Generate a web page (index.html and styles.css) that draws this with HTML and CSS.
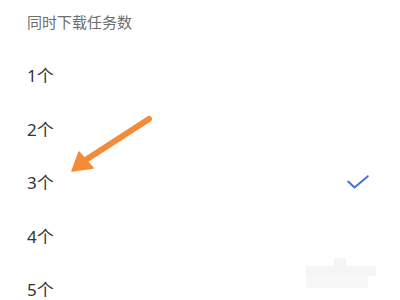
FILE: index.html
```html
<!DOCTYPE html>
<html lang="zh">
<head>
<meta charset="utf-8">
<link rel="stylesheet" href="styles.css">
</head>
<body>
<div class="page">
  <div class="title">同时下载任务数</div>
  <ul class="list">
    <li class="item"><span>1个</span></li>
    <li class="item"><span>2个</span></li>
    <li class="item selected"><span>3个</span>
      <svg class="check" width="22" height="14" viewBox="0 0 22 14"><path d="M1.2 6.5 L7.5 12.5 L20.8 1.2" fill="none" stroke="#3a6fd3" stroke-width="1.8" stroke-linecap="round" stroke-linejoin="round"/></svg>
    </li>
    <li class="item"><span>4个</span></li>
    <li class="item"><span>5个</span></li>
  </ul>
  <svg class="arrow" width="400" height="300" viewBox="0 0 400 300">
    <line x1="149" y1="119" x2="84" y2="161" stroke="#f58a37" stroke-width="6" stroke-linecap="round"/>
    <polygon points="72,171 79,152 93,168" fill="#f58a37" stroke="#f58a37" stroke-width="1.5" stroke-linejoin="round"/>
  </svg>
  <div class="mosaic">
    <div class="m m1"></div>
    <div class="m m2"></div>
    <div class="m m3"></div>
  </div>
</div>
</body>
</html>
```
FILE: styles.css
```css
html, body {
  margin: 0;
  padding: 0;
  background: #ffffff;
}
.page {
  position: relative;
  width: 400px;
  height: 300px;
  overflow: hidden;
  padding-left: 27px;
  box-sizing: border-box;
  font-family: "Noto Sans", "Noto Sans CJK SC", sans-serif;
}
.title {
  height: 44px;
  line-height: 44px;
  font-size: 15px;
  color: #6e6e6e;
  margin-bottom: 4px;
}
.list {
  list-style: none;
  margin: 0;
  padding: 0;
}
.item {
  height: 53.5px;
  display: flex;
  align-items: center;
  justify-content: space-between;
  padding-right: 31px;
  font-size: 17px;
  color: #333333;
}
.check {
  display: block;
}
.arrow {
  position: absolute;
  left: 0;
  top: 0;
}
.mosaic {
  position: absolute;
  left: 306px;
  top: 258px;
  width: 72px;
  height: 38px;
}
.m {
  position: absolute;
  background: #f3f3f3;
}
.m1 { left: 0; top: 8px; width: 70px; height: 10px; background: #f5f5f5; }
.m2 { left: 28px; top: 0; width: 12px; height: 10px; background: #f6f6f6; }
.m3 { left: 0; top: 18px; width: 62px; height: 12px; background: #f7f7f7; }
```
